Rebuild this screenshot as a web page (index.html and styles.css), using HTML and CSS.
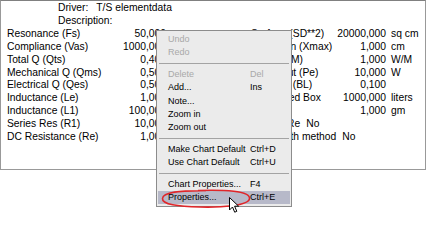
FILE: index.html
```html
<!DOCTYPE html>
<html lang="en">
<head>
    <meta charset="UTF-8">
    <title>Driver parameters</title>
    <link rel="stylesheet" href="styles.css">
</head>
<body>
    <!-- Parameter panel -->
    <div class="panel">
        <div class="head">
            <div><span class="head-label">Driver:</span>T/S elementdata</div>
            <div>Description:</div>
        </div>
        <div class="params">
            <span class="lbl">Resonance (Fs)</span><span class="val">50,000</span><span class="unit"></span>
            <span class="lbl">Surface (SD**2)</span><span class="val">20000,000</span><span class="unit">sq cm</span>

            <span class="lbl">Compliance (Vas)</span><span class="val">1000,000</span><span class="unit"></span>
            <span class="lbl">Excursion (Xmax)</span><span class="val">1,000</span><span class="unit">cm</span>

            <span class="lbl">Total Q (Qts)</span><span class="val">0,400</span><span class="unit"></span>
            <span class="lbl">Rms (W/M)</span><span class="val">1,000</span><span class="unit">W/M</span>

            <span class="lbl">Mechanical Q (Qms)</span><span class="val">0,500</span><span class="unit"></span>
            <span class="lbl">Max Input (Pe)</span><span class="val">10,000</span><span class="unit">W</span>

            <span class="lbl">Electrical Q (Qes)</span><span class="val">0,500</span><span class="unit"></span>
            <span class="lbl">Strength (BL)</span><span class="val">0,100</span><span class="unit"></span>

            <span class="lbl">Inductance (Le)</span><span class="val">1,000</span><span class="unit"></span>
            <span class="lbl">Vol Sealed Box</span><span class="val">1000,000</span><span class="unit">liters</span>

            <span class="lbl">Inductance (L1)</span><span class="val">100,000</span><span class="unit"></span>
            <span class="lbl"></span><span class="val">1,000</span><span class="unit">gm</span>

            <span class="lbl">Series Res (R1)</span><span class="val">10,000</span><span class="unit"></span>
            <span class="lbl wide">Include Re<span class="flag">No</span></span>

            <span class="lbl">DC Resistance (Re)</span><span class="val">1,000</span><span class="unit"></span>
            <span class="lbl wide">Fit smooth method<span class="flag">No</span></span>
        </div>
    </div>

    <!-- Context menu -->
    <div class="menu">
        <div class="item disabled"><span>Undo</span></div>
        <div class="item disabled"><span>Redo</span></div>
        <div class="sep"></div>
        <div class="item disabled"><span>Delete</span><span>Del</span></div>
        <div class="item"><span>Add...</span><span>Ins</span></div>
        <div class="item"><span>Note...</span></div>
        <div class="item"><span>Zoom in</span></div>
        <div class="item"><span>Zoom out</span></div>
        <div class="sep"></div>
        <div class="item"><span>Make Chart Default</span><span>Ctrl+D</span></div>
        <div class="item"><span>Use Chart Default</span><span>Ctrl+U</span></div>
        <div class="sep"></div>
        <div class="item"><span>Chart Properties...</span><span>F4</span></div>
        <div class="item active"><span>Properties...</span><span>Ctrl+E</span></div>
    </div>

    <!-- Red marker ring -->
    <svg class="ring" width="96" height="22" viewBox="0 0 96 22">
        <path d="M40 2.5 C66 1.5 92 3 91.5 10.5 C91 18 62 19.5 42 19 C20 18.5 4 16.5 4.5 10.5 C5 4 22 2.5 48 2.8" fill="none" stroke="#e0262a" stroke-width="1.6"/>
    </svg>

    <!-- Mouse pointer -->
    <svg class="pointer" width="11" height="17" viewBox="0 0 11 17">
        <path d="M0.5 0.5 L0.5 13 L3.5 10 L5.7 15.2 L7.8 14.3 L5.6 9.2 L9.6 9.2 Z" fill="#fff" stroke="#000" stroke-width="1"/>
    </svg>
</body>
</html>
```

FILE: styles.css
```css
/* Basic Reset */
* {
    margin: 0;
    padding: 0;
    box-sizing: border-box;
}

body {
    position: relative;
    width: 433px;
    height: 243px;
    background: #fff;
    color: #000;
    font-family: "Liberation Sans", Arial, sans-serif;
    overflow: hidden;
}

/* Panel */
.panel {
    width: 426px;
    height: 170px;
    border: 1px solid #999;
    border-top-color: #808080;
    padding: 1px 0 0 6px;
    font-size: 10.3px;
    line-height: 12.9px;
}

.head {
    padding-left: 51px;
}

.head-label {
    margin-right: 8px;
}

.params {
    display: grid;
    grid-template-columns: 113px 46px 85px 85px 50px 1fr;
    white-space: nowrap;
}

.val {
    text-align: right;
}

.unit {
    padding-left: 5px;
}

.wide {
    grid-column: 4 / 7;
}

.flag {
    margin-left: 6px;
}

/* Context menu */
.menu {
    position: absolute;
    top: 30px;
    left: 156px;
    width: 136px;
    padding: 2px 1px;
    background: #ebebeb;
    border: 1px solid #8c8c8c;
    font-size: 9px;
}

.item {
    display: grid;
    grid-template-columns: 82px auto;
    height: 13.4px;
    line-height: 13.4px;
    padding-left: 10px;
    white-space: nowrap;
}

.item.disabled {
    color: #a9a9a9;
}

.item.active {
    background: #b7b9c9;
}

.sep {
    height: 8px;
    padding-top: 3px;
    margin: 0 1px;
}

.sep::before {
    content: "";
    display: block;
    height: 1px;
    background: #a3a3a3;
}

/* Overlays */
.ring {
    position: absolute;
    top: 188px;
    left: 158px;
}

.pointer {
    position: absolute;
    top: 197px;
    left: 229px;
}
```
